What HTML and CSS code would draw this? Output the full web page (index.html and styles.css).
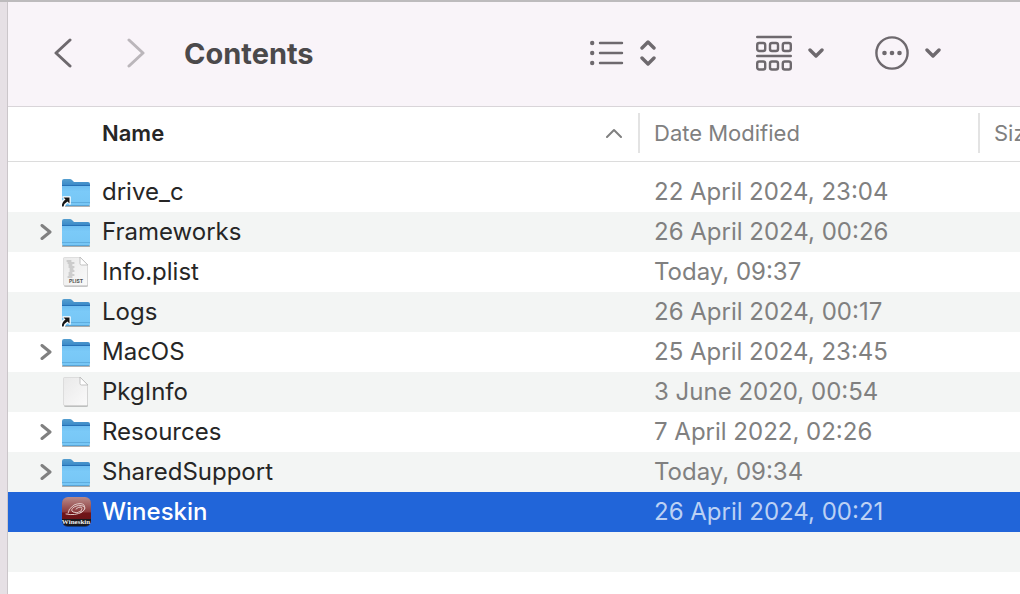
FILE: index.html
```html
<!DOCTYPE html>
<html lang="en">
<head>
    <meta charset="utf-8">
    <title>Contents</title>
    <link rel="stylesheet" href="styles.css">
</head>
<body>
<svg class="defs" aria-hidden="true">
    <defs>
        <linearGradient id="folder-back" x1="0" y1="0" x2="0" y2="1">
            <stop offset="0" stop-color="#559fd0"/>
            <stop offset="0.3" stop-color="#3585c6"/>
            <stop offset="1" stop-color="#3585c6"/>
        </linearGradient>
        <linearGradient id="folder-front" x1="0" y1="0" x2="0" y2="1">
            <stop offset="0" stop-color="#6dbdf0"/>
            <stop offset="0.3" stop-color="#7bcaf8"/>
            <stop offset="1" stop-color="#76c6f5"/>
        </linearGradient>
        <linearGradient id="paper" x1="0" y1="0" x2="1" y2="1">
            <stop offset="0" stop-color="#e9e9e9"/>
            <stop offset="1" stop-color="#fafafa"/>
        </linearGradient>
        <linearGradient id="wine" x1="0" y1="0" x2="0" y2="1">
            <stop offset="0" stop-color="#b98a88"/>
            <stop offset="0.5" stop-color="#8d3d3f"/>
            <stop offset="0.56" stop-color="#701519"/>
            <stop offset="1" stop-color="#651417"/>
        </linearGradient>
        <clipPath id="wine-clip"><rect x="2" y="1" width="29" height="29" rx="6"/></clipPath>
    </defs>
    <symbol id="folder" viewBox="0 0 32 32">
        <path d="M2 29h28v1.500q0 .5-1 .5h-26q-1 0-1-.5z" fill="#000" opacity=".3"/>
        <path d="M2 5q0-2 2-2h6q1 0 2 1l2 2h14q2 0 2 2v20h-28z" fill="url(#folder-back)"/>
        <path d="M2 9.500h28v18.500q0 1.500-1.500 1.500h-25q-1.500 0-1.500-1.500z" fill="url(#folder-front)"/>
        <rect x="2" y="9" width="28" height="1" fill="#2770b5"/>
        <rect x="2" y="26" width="28" height="1" fill="#5eaddf"/>
        <rect x="3" y="29" width="26" height="1" fill="#5aa4d5"/>
    </symbol>
    <symbol id="alias" viewBox="0 0 32 32">
        <path d="M3 21h7v7l-2-2q-3 1-4 5h-3q-.5-5 4-8z" fill="#fff" stroke="#fff" stroke-width="1.500"/>
        <path d="M3.500 21.500h6v6l-2-2q-3 1.500-4 5h-1.500q-.5-4 3.500-7z" fill="#161616"/>
    </symbol>
    <symbol id="page" viewBox="0 0 32 32">
        <path d="M4 2.500h16l8 8v19q0 1.500-1.500 1.500h-21q-1.500 0-1.500-1.500z" fill="#000" opacity=".22"/>
        <path d="M3.500 2q0-.5 1-.5h15.500l7.500 7.500v19.500q0 1-1 1h-22q-1 0-1-1z" fill="url(#paper)" stroke="#cfcfcf" stroke-width=".6"/>
        <path d="M20 1.500v6q0 1.500 1.500 1.500h6z" fill="#fff" stroke="#b4b4b4" stroke-width=".8"/>
    </symbol>
    <symbol id="plist" viewBox="0 0 32 32">
        <use href="#page"/>
        <path d="M7 5h4M8 7h6M9 9h3M9 11h5M10 13h3M10 15h4M9 17h3M9 19h5M8 21h4" stroke="#aaa" stroke-width="1"/>
        <text class="plist-text" x="16" y="27" text-anchor="middle">PLIST</text>
    </symbol>
    <symbol id="wineskin" viewBox="0 0 32 32">
        <rect x="2" y="2" width="29" height="29" rx="6" fill="#173b7c"/>
        <g clip-path="url(#wine-clip)">
            <rect x="2" y="1" width="29" height="29" fill="url(#wine)"/>
            <rect x="2" y="23" width="29" height="7" fill="#17191e"/>
            <g fill="none" stroke="#dfc5c3" stroke-width="1">
                <path d="M6 18q9 2 16-2 5-4 1-6-4-2-9 1-4 3-1 5 4 2 8-1 2-3 0-4-3 0-5 2"/>
                <path d="M8 17q0-4 6-8 7-3 10 0 3 5-4 8"/>
            </g>
        </g>
        <text class="wine-text" x="16" y="28" text-anchor="middle">Wineskin</text>
    </symbol>
    <symbol id="chevron-right" viewBox="0 0 12 16">
        <path d="M2 1.500l8 6.500-8 6.500"/>
    </symbol>
    <symbol id="chevron-down" viewBox="0 0 16 10">
        <path d="M2 2l6 6 6-6"/>
    </symbol>
</svg>

<main class="window">
    <header class="toolbar">
        <nav class="history">
            <button type="button" aria-label="Back">
                <svg width="18" height="30" viewBox="0 0 18 30"><path d="M16 2L2 15l14 13"/></svg>
            </button>
            <button type="button" aria-label="Forward" class="dimmed">
                <svg width="18" height="30" viewBox="0 0 18 30"><path d="M2 2l14 13L2 28"/></svg>
            </button>
        </nav>
        <h1>Contents</h1>
        <div class="actions">
            <button type="button" aria-label="View as list">
                <svg width="34" height="26" viewBox="0 0 34 26">
                    <path d="M10 3h22M10 13h22M10 23h22"/>
                    <g class="filled"><circle cx="2.200" cy="3" r="2.200"/><circle cx="2.200" cy="13" r="2.200"/><circle cx="2.200" cy="23" r="2.200"/></g>
                </svg>
                <svg class="bold" width="16" height="26" viewBox="0 0 16 26"><path d="M2 8l6-6 6 6M2 18l6 6 6-6"/></svg>
            </button>
            <button type="button" aria-label="Group items">
                <svg width="36" height="36" viewBox="0 0 36 36">
                    <path d="M1.200 2h33.600M1.200 21h33.600"/>
                    <rect x="1.200" y="8" width="8" height="8" rx="2"/><rect x="14" y="8" width="8" height="8" rx="2"/><rect x="26.800" y="8" width="8" height="8" rx="2"/>
                    <rect x="1.200" y="26.500" width="8" height="8" rx="2"/><rect x="14" y="26.500" width="8" height="8" rx="2"/><rect x="26.800" y="26.500" width="8" height="8" rx="2"/>
                </svg>
                <svg class="bold" width="16" height="10"><use href="#chevron-down"/></svg>
            </button>
            <button type="button" aria-label="More actions">
                <svg width="34" height="34" viewBox="0 0 34 34">
                    <circle cx="17" cy="17" r="15.600"/>
                    <g class="filled"><circle cx="9.500" cy="17" r="2.300"/><circle cx="17" cy="17" r="2.300"/><circle cx="24.500" cy="17" r="2.300"/></g>
                </svg>
                <svg class="bold" width="16" height="10"><use href="#chevron-down"/></svg>
            </button>
        </div>
    </header>

    <table class="files">
        <thead>
            <tr>
                <th class="col-name" aria-sort="ascending">
                    <div class="heading">Name
                        <svg width="16" height="10" viewBox="0 0 16 10"><path d="M1 9l7-7 7 7"/></svg>
                    </div>
                </th>
                <th class="col-date"><div class="heading">Date Modified</div></th>
                <th class="col-size"><div class="heading">Size</div></th>
            </tr>
        </thead>
        <tbody>
            <tr>
                <td><div class="file"><svg class="icon"><use href="#folder"/><use href="#alias"/></svg>drive_c</div></td>
                <td>22 April 2024, 23:04</td>
                <td></td>
            </tr>
            <tr>
                <td><div class="file"><button type="button" class="expand" aria-label="Expand Frameworks"><svg width="12" height="16"><use href="#chevron-right"/></svg></button><svg class="icon"><use href="#folder"/></svg>Frameworks</div></td>
                <td>26 April 2024, 00:26</td>
                <td></td>
            </tr>
            <tr>
                <td><div class="file"><svg class="icon"><use href="#plist"/></svg>Info.plist</div></td>
                <td>Today, 09:37</td>
                <td></td>
            </tr>
            <tr>
                <td><div class="file"><svg class="icon"><use href="#folder"/><use href="#alias"/></svg>Logs</div></td>
                <td>26 April 2024, 00:17</td>
                <td></td>
            </tr>
            <tr>
                <td><div class="file"><button type="button" class="expand" aria-label="Expand MacOS"><svg width="12" height="16"><use href="#chevron-right"/></svg></button><svg class="icon"><use href="#folder"/></svg>MacOS</div></td>
                <td>25 April 2024, 23:45</td>
                <td></td>
            </tr>
            <tr>
                <td><div class="file"><svg class="icon"><use href="#page"/></svg>PkgInfo</div></td>
                <td>3 June 2020, 00:54</td>
                <td></td>
            </tr>
            <tr>
                <td><div class="file"><button type="button" class="expand" aria-label="Expand Resources"><svg width="12" height="16"><use href="#chevron-right"/></svg></button><svg class="icon"><use href="#folder"/></svg>Resources</div></td>
                <td>7 April 2022, 02:26</td>
                <td></td>
            </tr>
            <tr>
                <td><div class="file"><button type="button" class="expand" aria-label="Expand SharedSupport"><svg width="12" height="16"><use href="#chevron-right"/></svg></button><svg class="icon"><use href="#folder"/></svg>SharedSupport</div></td>
                <td>Today, 09:34</td>
                <td></td>
            </tr>
            <tr class="selected">
                <td><div class="file"><svg class="icon"><use href="#wineskin"/></svg>Wineskin</div></td>
                <td>26 April 2024, 00:21</td>
                <td></td>
            </tr>
            <tr><td></td><td></td><td></td></tr>
        </tbody>
    </table>
</main>
</body>
</html>
```
FILE: styles.css
```css
* {
    box-sizing: border-box;
}
body {
    margin: 0;
    padding-left: 7px;
    border-top: 2px solid #bdbbbd;
    background: #e6e0e5;
    font-family: Inter, "Liberation Sans", sans-serif;
    font-size: 24px;
    color: #262626;
    overflow: hidden;
}
.defs {
    position: absolute;
    width: 0;
    height: 0;
}
.window {
    min-height: calc(100vh - 2px);
    border-left: 1px solid #cbc6ca;
    background: #fff;
}
button {
    display: flex;
    align-items: center;
    padding: 0;
    border: none;
    background: none;
    color: inherit;
}
svg {
    flex: none;
    fill: none;
    stroke: currentColor;
    stroke-width: 3;
    stroke-linecap: round;
    stroke-linejoin: round;
}

/* toolbar */
.toolbar {
    display: flex;
    align-items: center;
    height: 105px;
    padding: 0 46px 2px;
    border-bottom: 1px solid #d9d5d9;
    background: #f9f4f9;
    color: #6e696e;
}
.history {
    display: flex;
    gap: 55px;
    margin-right: 39px;
}
.dimmed {
    color: #bbb6bb;
}
h1 {
    flex: 0 0 406px;
    margin: 0;
    font-size: 29px;
    font-weight: 700;
    color: #4b494b;
}
.actions {
    display: flex;
}
.actions button {
    gap: 16px;
    margin-right: 51px;
}
.actions button:first-child {
    margin-right: 100px;
}
.actions svg {
    stroke-width: 2.4;
}
.actions .bold {
    stroke-width: 3.4;
}
.actions .filled {
    fill: currentColor;
    stroke: none;
}

/* file list */
.files {
    width: 100%;
    table-layout: fixed;
    border-collapse: collapse;
}
.col-name {
    width: 630px;
}
.col-date {
    width: 340px;
}
th {
    height: 54px;
    padding: 0 0 2px;
    border-bottom: 1px solid #dcdcdc;
    font-size: 22px;
    font-weight: 400;
    text-align: left;
    color: #808080;
}
.heading {
    display: flex;
    align-items: center;
    justify-content: space-between;
    height: 40px;
    padding: 0 16px 0 14px;
    border-left: 2px solid #e3e3e3;
}
.heading svg {
    stroke-width: 2;
}
.col-name .heading {
    padding-left: 94px;
    border-left: none;
    font-weight: 600;
    color: #262626;
}
.col-name svg {
    color: #808080;
}
tbody::before {
    content: "";
    display: block;
    height: 10px;
}
tbody tr:nth-child(even) {
    background: #f3f5f4;
}
td {
    height: 40px;
    padding: 0 16px;
    white-space: nowrap;
    color: #808080;
}
td:first-child {
    padding: 0 0 0 32px;
    color: #262626;
}
.file {
    display: flex;
    align-items: center;
    position: relative;
    padding-left: 20px;
}
.expand {
    position: absolute;
    left: 0;
    color: #808080;
}
.icon {
    width: 32px;
    height: 32px;
    margin-right: 10px;
    stroke: none;
}
.plist-text {
    font-size: 5px;
    font-weight: 700;
    fill: #505050;
}
.wine-text {
    font-family: "Liberation Serif", serif;
    font-size: 7px;
    font-weight: 700;
    fill: #f0f0f0;
}
tbody .selected {
    background: #2165d9;
}
.selected td {
    color: #bcd1f4;
}
.selected td:first-child {
    font-weight: 500;
    color: #fff;
}
```
